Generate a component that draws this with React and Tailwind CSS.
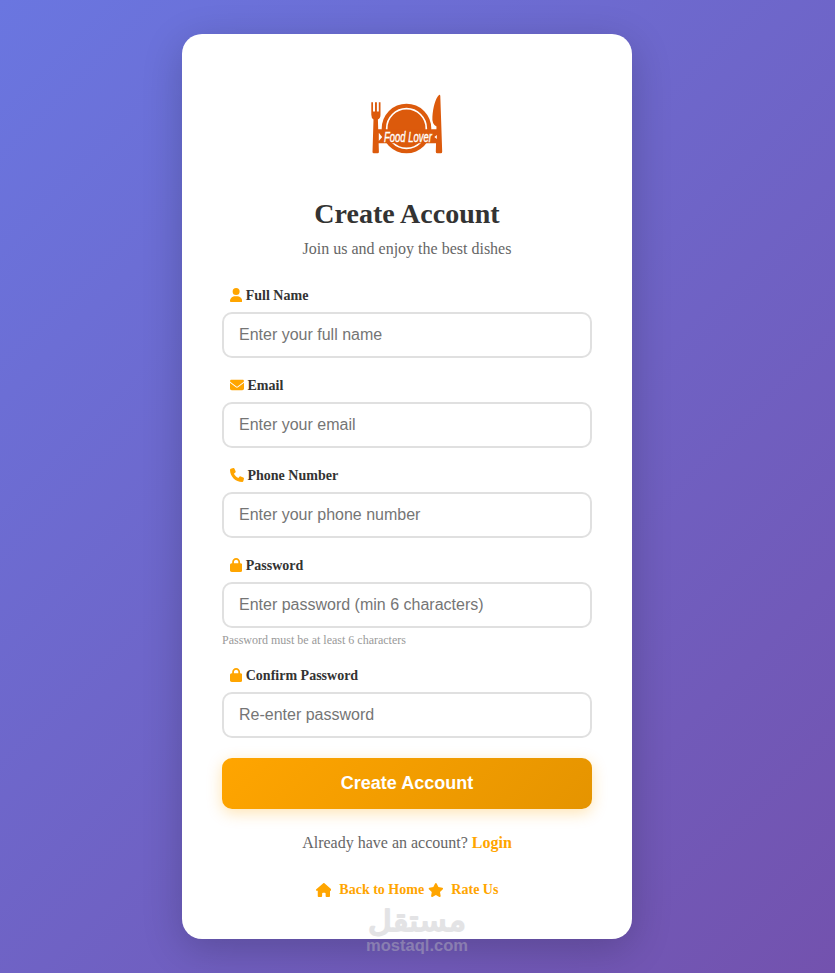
import React, { useState } from 'react'

const ICONS = {
  user: { width: 448, path: 'M224 256A128 128 0 1 0 224 0a128 128 0 1 0 0 256zm-45.7 48C79.8 304 0 383.8 0 482.3C0 498.7 13.3 512 29.7 512H418.3c16.4 0 29.7-13.3 29.7-29.7C448 383.8 368.2 304 269.7 304H178.3z' },
  envelope: { width: 512, path: 'M48 64C21.5 64 0 85.5 0 112c0 15.1 7.1 29.3 19.2 38.4L236.8 313.6c11.4 8.5 27 8.5 38.4 0L492.8 150.4c12.1-9.1 19.2-23.3 19.2-38.4c0-26.5-21.5-48-48-48H48zM0 176V384c0 35.3 28.7 64 64 64H448c35.3 0 64-28.7 64-64V176L294.4 339.2c-22.8 17.1-54 17.1-76.8 0L0 176z' },
  phone: { width: 512, path: 'M164.9 24.6c-7.7-18.6-28-28.5-47.4-23.2l-88 24C12.1 30.2 0 46 0 64C0 311.4 200.6 512 448 512c18 0 33.8-12.1 38.6-29.5l24-88c5.3-19.4-4.6-39.7-23.2-47.4l-96-40c-16.3-6.8-35.2-2.1-46.3 11.6L304.7 368C234.3 334.7 177.3 277.7 144 207.3L193.3 167c13.7-11.2 18.4-30 11.6-46.3l-40-96z' },
  lock: { width: 448, path: 'M144 144v48H304V144c0-44.2-35.8-80-80-80s-80 35.8-80 80zM80 192V144C80 64.5 144.5 0 224 0s144 64.5 144 144v48h16c35.3 0 64 28.7 64 64V448c0 35.3-28.7 64-64 64H64c-35.3 0-64-28.7-64-64V256c0-35.3 28.7-64 64-64H80z' },
  home: { width: 576, path: 'M575.8 255.5c0 18-15 32.1-32 32.1h-32l.7 160.2c0 2.7-.2 5.4-.5 8.1V472c0 22.1-17.9 40-40 40H456c-1.1 0-2.2 0-3.3-.1c-1.4 .1-2.8 .1-4.2 .1H416 392c-22.1 0-40-17.9-40-40V448 384c0-17.7-14.3-32-32-32H256c-17.7 0-32 14.3-32 32v64 24c0 22.1-17.9 40-40 40H160 128.1c-1.5 0-3-.1-4.5-.2c-1.2 .1-2.4 .2-3.6 .2H104c-22.1 0-40-17.9-40-40V360c0-.9 0-1.9 .1-2.8V287.6H32c-18 0-32-14-32-32.1c0-9 3-17 10-24L266.4 8c7-7 15-8 22-8s15 2 21 7L564.8 231.5c8 7 12 15 11 24z' },
  star: { width: 576, path: 'M316.9 18C311.6 7 300.4 0 288.1 0s-23.4 7-28.8 18L195 150.3 51.4 171.5c-12 1.8-22 10.2-25.7 21.7s-.7 24.2 7.9 32.7L137.8 329 113.2 474.7c-2 12 3 24.2 12.9 31.3s23 8 33.8 2.3l128.3-68.5 128.3 68.5c10.8 5.7 23.9 4.9 33.8-2.3s14.9-19.3 12.9-31.3L438.5 329 542.7 225.9c8.6-8.5 11.7-21.2 7.9-32.7s-13.7-19.9-25.7-21.7L381.2 150.3 316.9 18z' },
}

const FIELDS = [
  { name: 'fullName', label: 'Full Name', type: 'text', placeholder: 'Enter your full name', icon: 'user' },
  { name: 'email', label: 'Email', type: 'email', placeholder: 'Enter your email', icon: 'envelope' },
  { name: 'phone', label: 'Phone Number', type: 'tel', placeholder: 'Enter your phone number', icon: 'phone' },
  { name: 'password', label: 'Password', type: 'password', placeholder: 'Enter password (min 6 characters)', icon: 'lock', hint: 'Password must be at least 6 characters' },
  { name: 'confirm', label: 'Confirm Password', type: 'password', placeholder: 'Re-enter password', icon: 'lock' },
]

const Icon = ({ name }) => (
  <svg viewBox={`0 0 ${ICONS[name].width} 512`} fill="currentColor" className="h-3.5 w-auto shrink-0 text-[#ffa500]">
    <path d={ICONS[name].path}/>
  </svg>
)

const Logo = () => (
  <svg viewBox="0 0 90 80" className="w-[90px] h-20" fill="#dc5a0c">
    {/* Plate */}
    <circle cx="44.5" cy="43.5" r="24.8"/>
    <circle cx="44.5" cy="43.5" r="19.8" fill="none" stroke="#fff" strokeWidth="1.7"/>
    {/* Fork */}
    <path d="M9.3 17.2H11v9.3h2v-9.3h1.9v9.3h1.9v-9.3h1.7v12.6q0 3.6-2.6 4.6l1 32.6q0 1.3-1.3 1.3h-3.8q-1.3 0-1.3-1.3l1-32.6q-2.2-1-2.2-4.6z"/>
    {/* Knife */}
    <path d="M77 10q1.1-.6 1.3 1l1.9 55.7q0 1.6-1.5 1.6h-3.4q-1.5 0-1.5-1.6l.7-25.2q-4.8-2.1-4.1-9.7C71 23 73.4 13 77 10z"/>
    {/* Banner */}
    <path d="M12 44.2h64v14H12z"/>
    <path d="M16.8 47.8v8.2l3.4-4.1z" fill="#fff"/>
    <path d="M74.8 50v4l-2.4-2z" fill="#fff"/>
    <text x="22" y="57" textLength="48" lengthAdjust="spacingAndGlyphs" fill="#fff" stroke="#fff" strokeWidth="0.35" className="font-['Liberation_Sans_Narrow','Liberation_Sans',sans-serif] text-[15px] italic">Food Lover</text>
  </svg>
)

const Watermark = () => (
  <div className="absolute bottom-3 left-[347px] w-[140px] h-[64px] pointer-events-none">
    <svg viewBox="0 0 140 64" className="w-full h-full overflow-visible" fill="#bebec2" opacity="0.42">
      <text x="70" y="34" direction="rtl" textAnchor="middle" textLength="98" lengthAdjust="spacingAndGlyphs" stroke="#bebec2" strokeWidth="1.8" strokeLinejoin="round" className="font-['DejaVu_Sans',sans-serif] text-[29px]">مستقل</text>
      <text x="19" y="54" textLength="102" lengthAdjust="spacingAndGlyphs" className="font-['Liberation_Sans',sans-serif] text-[16px] font-bold">mostaql.com</text>
    </svg>
  </div>
)

const App = () => {
  const [form, setForm] = useState({ fullName: '', email: '', phone: '', password: '', confirm: '' })

  return (
    <div className="relative h-screen overflow-hidden bg-[linear-gradient(135deg,#6a76e0_0%,#7352ae_100%)] pt-[34px] pl-[182px] font-['Liberation_Serif',serif]">
      <div className="w-[450px] h-[905px] px-10 pt-[51px] bg-white rounded-[20px] shadow-[0_10px_40px_rgba(0,0,0,0.2)]">
        {/* Header */}
        <div className="flex flex-col items-center mb-[30px]">
          <Logo />
          <h1 className="mt-[33px] text-[28px] leading-8 font-bold text-[#333]">Create Account</h1>
          <p className="mt-2.5 text-base leading-[18px] text-[#666]">Join us and enjoy the best dishes</p>
        </div>

        <form onSubmit={e => e.preventDefault()}>
          {FIELDS.map(f => (
            <div key={f.name} className="mb-5">
              <label htmlFor={f.name} className="flex items-start gap-[3.5px] h-4 mb-2 pl-2 text-sm leading-4 font-bold text-[#333]">
                <Icon name={f.icon} />
                {f.label}
              </label>
              <input id={f.name} type={f.type} placeholder={f.placeholder} value={form[f.name]}
                onChange={e => setForm({ ...form, [f.name]: e.target.value })}
                className="block w-full h-[46px] px-[15px] border-2 border-[#e0e0e0] rounded-[10px] font-['Liberation_Sans',sans-serif] text-base placeholder:text-[#757575] outline-none focus:border-[#ffa500]"/>
              {f.hint && <small className="block mt-[5px] text-xs leading-[15px] text-[#999]">{f.hint}</small>}
            </div>
          ))}

          <button type="submit" className="block w-full h-[51px] pb-0.5 rounded-[10px] bg-[linear-gradient(135deg,#ffa500,#e59400)] shadow-[0_4px_15px_rgba(255,165,0,0.3)] font-['Liberation_Sans',sans-serif] text-lg font-bold text-white cursor-pointer">
            Create Account
          </button>
        </form>

        <p className="mt-[25px] text-center text-base leading-[18px] text-[#666]">
          Already have an account? <a href="#" className="font-bold text-[#ffa500]">Login</a>
        </p>

        {/* Footer links */}
        <div className="flex justify-center gap-[3.5px] mt-[30px] text-sm leading-4 font-bold text-[#ffa500]">
          <a href="#" className="flex items-center gap-2"><Icon name="home" />Back to Home</a>
          <a href="#" className="flex items-center gap-2"><Icon name="star" />Rate Us</a>
        </div>
      </div>
      <Watermark />
    </div>
  )
}

export default App
